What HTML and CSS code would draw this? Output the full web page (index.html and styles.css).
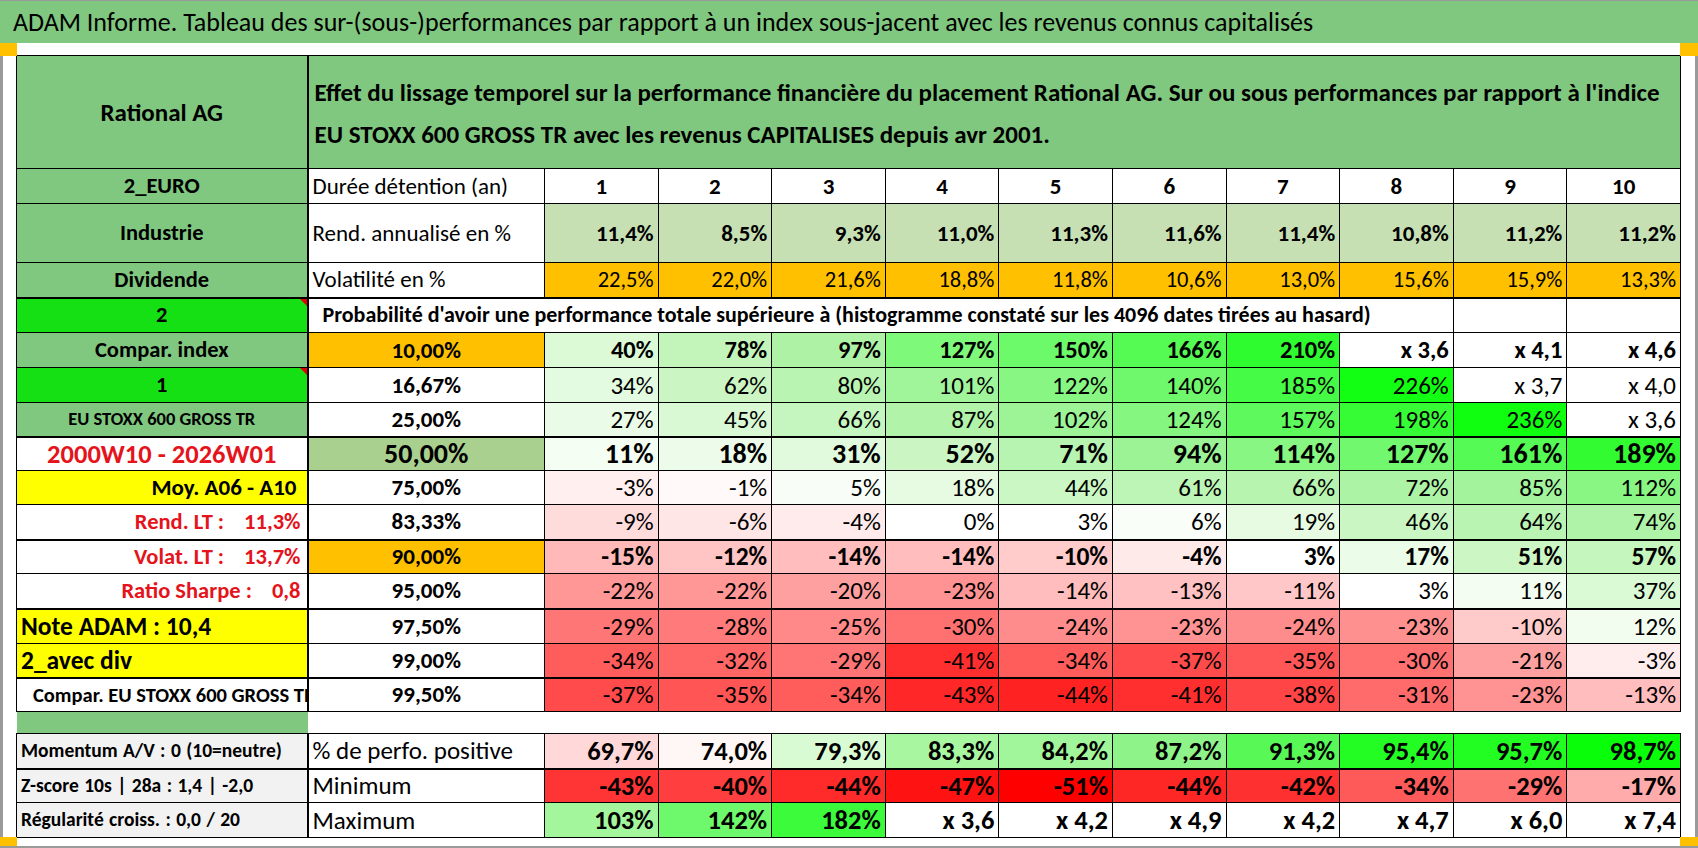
FILE: index.html
```html
<!DOCTYPE html>
<html lang="fr">
<head>
<meta charset="utf-8">
<title>ADAM Informe</title>
<link rel="stylesheet" href="styles.css">
</head>
<body>
<div class="page">
  <div class="titlebar">ADAM Informe. Tableau des sur-(sous-)performances par rapport à un index sous-jacent avec les revenus connus capitalisés</div>
  <div class="sheet">
    <table class="grid">
      <colgroup>
        <col class="col-a"><col class="col-b">
        <col class="col-d"><col class="col-d"><col class="col-d"><col class="col-d"><col class="col-d">
        <col class="col-d"><col class="col-d"><col class="col-d"><col class="col-d"><col class="col-d">
      </colgroup>
      <tr class="h-head">
        <td class="la ga c name">Rational AG</td>
        <td colspan="11" class="ga htext">Effet du lissage temporel sur la performance financière du placement Rational AG. Sur ou sous performances par rapport à l'indice<br><span class="l2">EU STOXX 600 GROSS TR avec les revenus CAPITALISES depuis avr 2001.</span></td>
      </tr>
      <tr class="h35 v-hdr">
        <td class="la ga c">2_EURO</td>
        <td class="lb">Durée détention (an)</td>
        <td class="c">1</td><td class="c">2</td><td class="c">3</td><td class="c">4</td><td class="c">5</td>
        <td class="c">6</td><td class="c">7</td><td class="c">8</td><td class="c">9</td><td class="c">10</td>
      </tr>
      <tr class="h59 v-rend">
        <td class="la ga c">Industrie</td>
        <td class="lb">Rend. annualisé en %</td>
        <td class="lg r">11,4%</td><td class="lg r">8,5%</td><td class="lg r">9,3%</td><td class="lg r">11,0%</td><td class="lg r">11,3%</td>
        <td class="lg r">11,6%</td><td class="lg r">11,4%</td><td class="lg r">10,8%</td><td class="lg r">11,2%</td><td class="lg r">11,2%</td>
      </tr>
      <tr class="h35 v-vol thick">
        <td class="la ga c">Dividende</td>
        <td class="lb">Volatilité en %</td>
        <td class="or r">22,5%</td><td class="or r">22,0%</td><td class="or r">21,6%</td><td class="or r">18,8%</td><td class="or r">11,8%</td>
        <td class="or r">10,6%</td><td class="or r">13,0%</td><td class="or r">15,6%</td><td class="or r">15,9%</td><td class="or r">13,3%</td>
      </tr>
      <tr class="h35">
        <td class="la bg2 c tri">2</td>
        <td colspan="9" class="proba">Probabilité d'avoir une performance totale supérieure à (histogramme constaté sur les 4096 dates tirées au hasard)</td>
        <td></td><td></td>
      </tr>
      <tr class="h35 v-10">
        <td class="la ga c">Compar. index</td>
        <td class="pb or c">10,00%</td>
        <td class="r" style="background:#DCFAD6">40%</td><td class="r" style="background:#C3F5BB">78%</td><td class="r" style="background:#AEF2A6">97%</td><td class="r" style="background:#7EF979">127%</td><td class="r" style="background:#6CF96A">150%</td>
        <td class="r" style="background:#55FA53">166%</td><td class="r" style="background:#2EFC2E">210%</td><td class="r">x 3,6</td><td class="r">x 4,1</td><td class="r">x 4,6</td>
      </tr>
      <tr class="h35 v-reg">
        <td class="la bg2 c tri">1</td>
        <td class="pb c">16,67%</td>
        <td class="r" style="background:#E3FBE0">34%</td><td class="r" style="background:#CBF6C4">62%</td><td class="r" style="background:#B9F4B2">80%</td><td class="r" style="background:#A0F49A">101%</td><td class="r" style="background:#88F683">122%</td>
        <td class="r" style="background:#70F86D">140%</td><td class="r" style="background:#45FB45">185%</td><td class="r" style="background:#12FE12">226%</td><td class="r">x 3,7</td><td class="r">x 4,0</td>
      </tr>
      <tr class="h34 v-reg thick">
        <td class="la ga c small">EU STOXX 600 GROSS TR</td>
        <td class="pb c">25,00%</td>
        <td class="r" style="background:#EAFCE7">27%</td><td class="r" style="background:#D9F9D4">45%</td><td class="r" style="background:#C6F6BF">66%</td><td class="r" style="background:#B0F3A9">87%</td><td class="r" style="background:#9DF497">102%</td>
        <td class="r" style="background:#85F680">124%</td><td class="r" style="background:#5EF95C">157%</td><td class="r" style="background:#36FC36">198%</td><td class="r" style="background:#10FF10">236%</td><td class="r">x 3,6</td>
      </tr>
      <tr class="h34 v-50">
        <td class="la c red period">2000W10 - 2026W01</td>
        <td class="pb mg c p50">50,00%</td>
        <td class="r" style="background:#F4FEF2">11%</td><td class="r" style="background:#EDFCEA">18%</td><td class="r" style="background:#E1FADD">31%</td><td class="r" style="background:#CBF6C4">52%</td><td class="r" style="background:#B8F4B1">71%</td>
        <td class="r" style="background:#9BF395">94%</td><td class="r" style="background:#87F682">114%</td><td class="r" style="background:#72F86F">127%</td><td class="r" style="background:#56FA54">161%</td><td class="r" style="background:#32FB32">189%</td>
      </tr>
      <tr class="h34 v-reg">
        <td class="la yl r moy">Moy. A06 - A10</td>
        <td class="pb c">75,00%</td>
        <td class="r" style="background:#FFEFEF">-3%</td><td class="r" style="background:#FFF9F9">-1%</td><td class="r" style="background:#F8FEF7">5%</td><td class="r" style="background:#E6FBE2">18%</td><td class="r" style="background:#CAF7C3">44%</td>
        <td class="r" style="background:#BCF5B5">61%</td><td class="r" style="background:#B7F4B0">66%</td><td class="r" style="background:#ADF3A6">72%</td><td class="r" style="background:#A2F39B">85%</td><td class="r" style="background:#89F684">112%</td>
      </tr>
      <tr class="h35 v-reg thick">
        <td class="la r red"><span>Rend. LT :</span><span class="num">11,3%</span></td>
        <td class="pb c">83,33%</td>
        <td class="r" style="background:#FFDCDC">-9%</td><td class="r" style="background:#FFE6E6">-6%</td><td class="r" style="background:#FFEBEB">-4%</td><td class="r">0%</td><td class="r">3%</td>
        <td class="r" style="background:#FAFEF9">6%</td><td class="r" style="background:#E6FBE2">19%</td><td class="r" style="background:#C9F6C2">46%</td><td class="r" style="background:#BAF4B3">64%</td><td class="r" style="background:#AEF3A7">74%</td>
      </tr>
      <tr class="h34 v-90">
        <td class="la r red"><span>Volat. LT :</span><span class="num">13,7%</span></td>
        <td class="pb or c">90,00%</td>
        <td class="r" style="background:#FFB9B9">-15%</td><td class="r" style="background:#FFC4C4">-12%</td><td class="r" style="background:#FFBDBD">-14%</td><td class="r" style="background:#FFBDBD">-14%</td><td class="r" style="background:#FFCBCB">-10%</td>
        <td class="r" style="background:#FFEAEA">-4%</td><td class="r">3%</td><td class="r" style="background:#EBFCE8">17%</td><td class="r" style="background:#CCF7C5">51%</td><td class="r" style="background:#C5F6BE">57%</td>
      </tr>
      <tr class="h35 v-reg thick">
        <td class="la r red"><span>Ratio Sharpe :</span><span class="num">0,8</span></td>
        <td class="pb c">95,00%</td>
        <td class="r" style="background:#FF9797">-22%</td><td class="r" style="background:#FF9797">-22%</td><td class="r" style="background:#FFA0A0">-20%</td><td class="r" style="background:#FF9393">-23%</td><td class="r" style="background:#FFBDBD">-14%</td>
        <td class="r" style="background:#FFC1C1">-13%</td><td class="r" style="background:#FFC7C7">-11%</td><td class="r">3%</td><td class="r" style="background:#F3FDF1">11%</td><td class="r" style="background:#DAF9D5">37%</td>
      </tr>
      <tr class="h35 v-reg">
        <td class="la yl l note">Note ADAM : 10,4</td>
        <td class="pb c">97,50%</td>
        <td class="r" style="background:#FF7676">-29%</td><td class="r" style="background:#FF7B7B">-28%</td><td class="r" style="background:#FF8888">-25%</td><td class="r" style="background:#FF7171">-30%</td><td class="r" style="background:#FF8C8C">-24%</td>
        <td class="r" style="background:#FF9393">-23%</td><td class="r" style="background:#FF8C8C">-24%</td><td class="r" style="background:#FF9090">-23%</td><td class="r" style="background:#FFCACA">-10%</td><td class="r" style="background:#F2FDF0">12%</td>
      </tr>
      <tr class="h34 v-reg thick">
        <td class="la yl l note">2_avec div</td>
        <td class="pb c">99,00%</td>
        <td class="r" style="background:#FF5C5C">-34%</td><td class="r" style="background:#FF6666">-32%</td><td class="r" style="background:#FF7474">-29%</td><td class="r" style="background:#FF2F2F">-41%</td><td class="r" style="background:#FF5C5C">-34%</td>
        <td class="r" style="background:#FF4B4B">-37%</td><td class="r" style="background:#FF5757">-35%</td><td class="r" style="background:#FF7070">-30%</td><td class="r" style="background:#FFA0A0">-21%</td><td class="r" style="background:#FFEDED">-3%</td>
      </tr>
      <tr class="h34 v-reg">
        <td class="la l compar">Compar. EU STOXX 600 GROSS TR</td>
        <td class="pb c">99,50%</td>
        <td class="r" style="background:#FF4B4B">-37%</td><td class="r" style="background:#FF5555">-35%</td><td class="r" style="background:#FF5C5C">-34%</td><td class="r" style="background:#FF2727">-43%</td><td class="r" style="background:#FF2222">-44%</td>
        <td class="r" style="background:#FF2F2F">-41%</td><td class="r" style="background:#FF4545">-38%</td><td class="r" style="background:#FF6B6B">-31%</td><td class="r" style="background:#FF9393">-23%</td><td class="r" style="background:#FFBDBD">-13%</td>
      </tr>
      <tr class="gap">
        <td class="ga gapa"></td>
        <td colspan="11" class="gapb"></td>
      </tr>
      <tr class="h35 v-bot thick">
        <td class="la gy l stat">Momentum A/V : 0 (10=neutre)</td>
        <td class="lb big">% de perfo. positive</td>
        <td class="r" style="background:#FFD9D9">69,7%</td><td class="r" style="background:#FFF6F6">74,0%</td><td class="r" style="background:#D9FBD3">79,3%</td><td class="r" style="background:#A9F6A1">83,3%</td><td class="r" style="background:#A1F59A">84,2%</td>
        <td class="r" style="background:#8EF489">87,2%</td><td class="r" style="background:#58F957">91,3%</td><td class="r" style="background:#24FD24">95,4%</td><td class="r" style="background:#22FD22">95,7%</td><td class="r" style="background:#09FF09">98,7%</td>
      </tr>
      <tr class="h34 v-bot">
        <td class="la gy l stat">Z-score 10s | 28a : 1,4 | -2,0</td>
        <td class="lb big">Minimum</td>
        <td class="r" style="background:#FF3535">-43%</td><td class="r" style="background:#FF3F3F">-40%</td><td class="r" style="background:#FF2B2B">-44%</td><td class="r" style="background:#FF1212">-47%</td><td class="r" style="background:#FF0000">-51%</td>
        <td class="r" style="background:#FF2626">-44%</td><td class="r" style="background:#FF3030">-42%</td><td class="r" style="background:#FF5A5A">-34%</td><td class="r" style="background:#FF7272">-29%</td><td class="r" style="background:#FFABAB">-17%</td>
      </tr>
      <tr class="h35 v-bot">
        <td class="la gy l stat">Régularité croiss. : 0,0 / 20</td>
        <td class="lb big">Maximum</td>
        <td class="r" style="background:#A4F69D">103%</td><td class="r" style="background:#6EF86C">142%</td><td class="r" style="background:#3BFB3B">182%</td><td class="r">x 3,6</td><td class="r">x 4,2</td>
        <td class="r">x 4,9</td><td class="r">x 4,2</td><td class="r">x 4,7</td><td class="r">x 6,0</td><td class="r">x 7,4</td>
      </tr>
    </table>
  </div>
  <span class="mark m-tl"></span>
  <span class="mark m-tr"></span>
  <span class="mark m-bl"></span>
  <span class="mark m-br"></span>
</div>
</body>
</html>
```

FILE: styles.css
```css
* { box-sizing: border-box; }
html, body { margin: 0; padding: 0; background: #fff; }
body { font-family: "Carlito", "Lato", "Liberation Sans", sans-serif; color: #000; }

.page {
  position: relative;
  width: 1698px;
  height: 848px;
  border-top: 1px solid #9a9a9a;
  border-bottom: 2px solid #9a9a9a;
  overflow: hidden;
}

.titlebar {
  height: 42px;
  background: #80C880;
  font-size: 26px;
  padding-left: 13px;
  display: flex;
  align-items: center;
  white-space: nowrap;
}

.sheet {
  height: 803px;
  border-left: 3px solid #9a9a9a;
  border-right: 3px solid #9a9a9a;
  padding: 12px 0 0 13px;
}

.grid {
  border-collapse: collapse;
  table-layout: fixed;
  width: 1664px;
}
.col-a { width: 291px; }
.col-b { width: 237px; }
.col-d { width: 113.6px; }

.grid td {
  border: 1px solid #000;
  padding: 0 4px;
  white-space: nowrap;
  overflow: hidden;
  vertical-align: middle;
  font-size: 23px;
  line-height: 1;
}

.h-head { height: 113px; }
.h35 { height: 35px; }
.h34 { height: 34px; }
.h59 { height: 59px; }
.gap { height: 22px; }

.thick td { border-bottom-width: 2px; }

/* data value rows */
.grid .v-hdr td { font-weight: 700; font-size: 23px; }
.grid .v-rend td { font-weight: 700; font-size: 23px; }
.grid .v-vol td { font-weight: 400; font-size: 22.5px; }
.grid .v-10 td { font-weight: 700; font-size: 24.5px; }
.grid .v-reg td { font-weight: 400; font-size: 25px; }
.grid .v-50 td { font-weight: 700; font-size: 28px; }
.grid .v-90 td { font-weight: 700; font-size: 25.5px; }
.grid .v-bot td { font-weight: 700; font-size: 26.5px; }

.c { text-align: center; }
.r { text-align: right; }
.l { text-align: left; }

/* column A */
.grid td.la { font-weight: 700; font-size: 22.5px; border-right-width: 2px; }
.grid td.name { font-size: 25px; }
.grid td.small { font-size: 18.5px; }
.grid td.period { font-size: 26.5px; }
.grid td.moy { padding-right: 10px; font-size: 23px; }
.grid td.note { font-size: 25.5px; }
.grid td.compar { font-size: 20.5px; padding-left: 16px; }
.grid td.stat { font-size: 19.5px; word-spacing: 1px; }
.grid td.red { color: #E5131B; }
.grid td.red.r { font-size: 22.5px; padding-right: 6px; }
.grid td.red .num { margin-left: 20px; }

/* column B */
.grid td.lb { font-weight: 400; font-size: 23px; text-align: left; }
.grid td.lb.big { font-size: 25px; }
.grid td.pb { font-weight: 700; font-size: 23px; }
.grid td.p50 { font-size: 28px; }

.ga { background: #80C880; }
.bg2 { background: #14E014; }
.yl { background: #FFFF00; }
.gy { background: #F2F2F2; }
.or { background: #FFC000; }
.lg { background: #C6E0B4; }
.mg { background: #A9D08E; }

.grid td.htext {
  font-weight: 700;
  font-size: 25px;
  line-height: 42px;
  padding: 4px 6px 0;
}

.grid td.proba {
  font-weight: 700;
  font-size: 22px;
  padding-left: 14px;
}

.tri { position: relative; }
.tri::after {
  content: "";
  position: absolute;
  top: 0;
  right: 0;
  border-top: 7px solid #E00000;
  border-left: 7px solid transparent;
}

.grid td.gapa {
  border-left-style: hidden;
  border-right-style: hidden;
}
.grid td.gapb {
  border-left-style: hidden;
  border-right-style: hidden;
  background: #fff;
}

.mark {
  position: absolute;
  background: #FFC000;
}
.m-tl { left: 0; top: 42px; width: 17px; height: 13px; }
.m-tr { right: 0; top: 42px; width: 18px; height: 13px; }
.m-bl { left: 0; bottom: 0; width: 17px; height: 9px; }
.m-br { right: 0; bottom: 0; width: 18px; height: 9px; }
```
